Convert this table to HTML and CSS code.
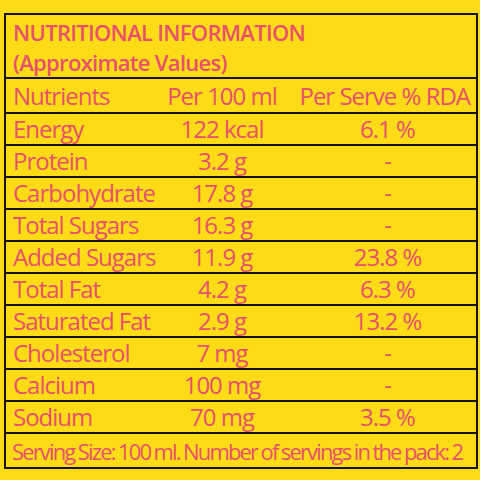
FILE: index.html
```html
<!DOCTYPE html>
<html lang="en">
<head>
    <meta charset="UTF-8">
    <title>Nutritional Information</title>
    <link rel="stylesheet" href="styles.css">
</head>
<body>
    <table class="facts">
        <colgroup>
            <col class="col-name">
            <col class="col-per100">
            <col class="col-rda">
        </colgroup>
        <!-- Title -->
        <tr class="title-row">
            <td colspan="3">
                <div class="title">NUTRITIONAL INFORMATION</div>
                <div class="subtitle">(Approximate Values)</div>
            </td>
        </tr>
        <!-- Column heads -->
        <tr class="head-row">
            <td class="name">Nutrients</td>
            <td class="val">Per 100 ml</td>
            <td class="val rda-head">Per Serve % RDA</td>
        </tr>
        <tr><td class="name">Energy</td><td class="val">122 kcal</td><td class="val">6.1 %</td></tr>
        <tr><td class="name">Protein</td><td class="val">3.2 g</td><td class="val">-</td></tr>
        <tr><td class="name">Carbohydrate</td><td class="val">17.8 g</td><td class="val">-</td></tr>
        <tr><td class="name">Total Sugars</td><td class="val">16.3 g</td><td class="val">-</td></tr>
        <tr><td class="name">Added Sugars</td><td class="val">11.9 g</td><td class="val">23.8 %</td></tr>
        <tr><td class="name">Total Fat</td><td class="val">4.2 g</td><td class="val">6.3 %</td></tr>
        <tr><td class="name">Saturated Fat</td><td class="val">2.9 g</td><td class="val">13.2 %</td></tr>
        <tr><td class="name">Cholesterol</td><td class="val">7 mg</td><td class="val">-</td></tr>
        <tr><td class="name">Calcium</td><td class="val">100 mg</td><td class="val">-</td></tr>
        <tr><td class="name">Sodium</td><td class="val">70 mg</td><td class="val">3.5 %</td></tr>
        <!-- Footer -->
        <tr class="serving-row">
            <td colspan="3" class="serving">Serving Size: 100 ml. Number of servings in the pack: 2</td>
        </tr>
    </table>
</body>
</html>
```

FILE: styles.css
```css
body {
    margin: 0;
    padding: 0;
    background-color: #fddc17;
    font-family: "Open Sans", "Noto Sans", sans-serif;
    color: #e8506b;
}
.facts {
    margin: 13px 4px 0 4px;
    width: 472px;
    border-collapse: collapse;
    table-layout: fixed;
    border: 2px solid #161410;
}
.col-name {
    width: 140px;
}
.col-per100 {
    width: 154px;
}
.col-rda {
    width: 178px;
}
.facts td {
    border-top: 2px solid #161410;
    padding: 0;
    height: 30px;
    white-space: nowrap;
    font-size: 24px;
    letter-spacing: -1px;
    vertical-align: middle;
    line-height: 1;
}
.name {
    padding-left: 7px !important;
}
.val {
    text-align: center;
}
.title-row td {
    height: 60px;
    padding-left: 7px;
    font-weight: 600;
    letter-spacing: -0.7px;
}
.title {
    font-size: 22px;
    line-height: 30px;
    padding-top: 2px;
}
.subtitle {
    font-size: 22px;
    line-height: 30px;
}
.head-row td {
    height: 33px;
}
.rda-head {
    text-align: right !important;
    padding-right: 6px !important;
}
.serving-row td {
    height: 33px;
}
.serving {
    padding-left: 6px !important;
    font-size: 22px !important;
    letter-spacing: -1.85px !important;
    word-spacing: -0.5px;
}
```
